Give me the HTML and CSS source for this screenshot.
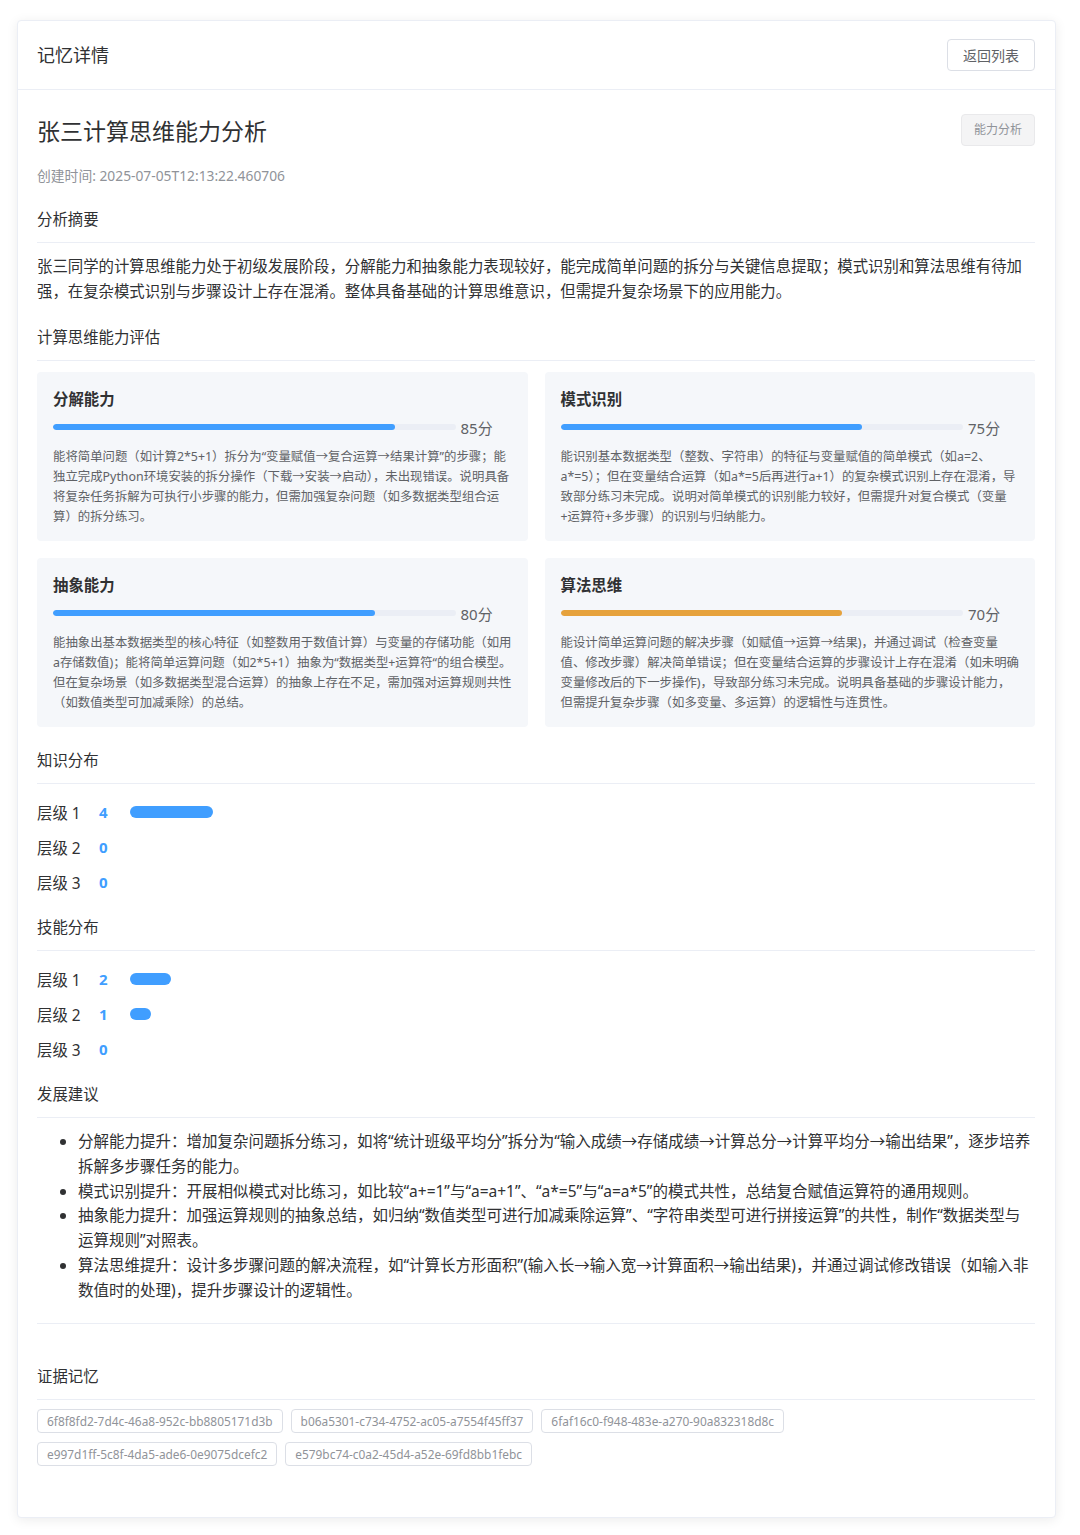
FILE: index.html
```html
<!DOCTYPE html>
<html lang="zh-CN">
<head>
<meta charset="utf-8">
<title>记忆详情</title>
<link rel="stylesheet" href="styles.css">
</head>
<body>
<div class="page">
  <div class="card">
    <div class="card-header">
      <span class="header-title">记忆详情</span>
      <button class="btn">返回列表</button>
    </div>
    <div class="card-body">
      <div class="title-row">
        <h2 class="title">张三计算思维能力分析</h2>
        <span class="type-tag">能力分析</span>
      </div>
      <div class="created">创建时间: 2025-07-05T12:13:22.460706</div>

      <div class="section">
        <div class="sec-title">分析摘要</div>
        <p class="summary">张三同学的计算思维能力处于初级发展阶段，分解能力和抽象能力表现较好，能完成简单问题的拆分与关键信息提取；模式识别和算法思维有待加强，在复杂模式识别与步骤设计上存在混淆。整体具备基础的计算思维意识，但需提升复杂场景下的应用能力。</p>
      </div>

      <div class="section">
        <div class="sec-title">计算思维能力评估</div>
        <div class="ability-grid">
          <div class="ability">
            <div class="ability-name">分解能力</div>
            <div class="bar-row">
              <div class="track"><div class="fill" style="width:85%"></div></div>
              <span class="score">85分</span>
            </div>
            <p class="desc">能将简单问题（如计算2*5+1）拆分为“变量赋值→复合运算→结果计算”的步骤；能独立完成Python环境安装的拆分操作（下载→安装→启动），未出现错误。说明具备将复杂任务拆解为可执行小步骤的能力，但需加强复杂问题（如多数据类型组合运算）的拆分练习。</p>
          </div>
          <div class="ability">
            <div class="ability-name">模式识别</div>
            <div class="bar-row">
              <div class="track"><div class="fill" style="width:75%"></div></div>
              <span class="score">75分</span>
            </div>
            <p class="desc">能识别基本数据类型（整数、字符串）的特征与变量赋值的简单模式（如a=2、a*=5）；但在变量结合运算（如a*=5后再进行a+1）的复杂模式识别上存在混淆，导致部分练习未完成。说明对简单模式的识别能力较好，但需提升对复合模式（变量+运算符+多步骤）的识别与归纳能力。</p>
          </div>
          <div class="ability">
            <div class="ability-name">抽象能力</div>
            <div class="bar-row">
              <div class="track"><div class="fill" style="width:80%"></div></div>
              <span class="score">80分</span>
            </div>
            <p class="desc">能抽象出基本数据类型的核心特征（如整数用于数值计算）与变量的存储功能（如用a存储数值)；能将简单运算问题（如2*5+1）抽象为“数据类型+运算符“的组合模型。但在复杂场景（如多数据类型混合运算）的抽象上存在不足，需加强对运算规则共性（如数值类型可加减乘除）的总结。</p>
          </div>
          <div class="ability">
            <div class="ability-name">算法思维</div>
            <div class="bar-row">
              <div class="track"><div class="fill fill-warn" style="width:70%"></div></div>
              <span class="score">70分</span>
            </div>
            <p class="desc">能设计简单运算问题的解决步骤（如赋值→运算→结果)，并通过调试（检查变量值、修改步骤）解决简单错误；但在变量结合运算的步骤设计上存在混淆（如未明确变量修改后的下一步操作)，导致部分练习未完成。说明具备基础的步骤设计能力，但需提升复杂步骤（如多变量、多运算）的逻辑性与连贯性。</p>
          </div>
        </div>
      </div>

      <div class="section">
        <div class="sec-title">知识分布</div>
        <div class="levels">
          <div class="level-row"><span class="level-label">层级 1</span><span class="level-count">4</span><span class="level-bar" style="width:83px"></span></div>
          <div class="level-row"><span class="level-label">层级 2</span><span class="level-count">0</span></div>
          <div class="level-row"><span class="level-label">层级 3</span><span class="level-count">0</span></div>
        </div>
      </div>

      <div class="section">
        <div class="sec-title">技能分布</div>
        <div class="levels">
          <div class="level-row"><span class="level-label">层级 1</span><span class="level-count">2</span><span class="level-bar" style="width:41px"></span></div>
          <div class="level-row"><span class="level-label">层级 2</span><span class="level-count">1</span><span class="level-bar" style="width:21px"></span></div>
          <div class="level-row"><span class="level-label">层级 3</span><span class="level-count">0</span></div>
        </div>
      </div>

      <div class="section">
        <div class="sec-title">发展建议</div>
        <ul class="advice">
          <li>分解能力提升：增加复杂问题拆分练习，如将“统计班级平均分”拆分为“输入成绩→存储成绩→计算总分→计算平均分→输出结果”，逐步培养拆解多步骤任务的能力。</li>
          <li>模式识别提升：开展相似模式对比练习，如比较“a+=1”与“a=a+1”、“a*=5”与“a=a*5”的模式共性，总结复合赋值运算符的通用规则。</li>
          <li>抽象能力提升：加强运算规则的抽象总结，如归纳“数值类型可进行加减乘除运算”、“字符串类型可进行拼接运算”的共性，制作“数据类型与运算规则”对照表。</li>
          <li>算法思维提升：设计多步骤问题的解决流程，如“计算长方形面积”(输入长→输入宽→计算面积→输出结果)，并通过调试修改错误（如输入非数值时的处理)，提升步骤设计的逻辑性。</li>
        </ul>
      </div>

      <div class="divider"></div>

      <div class="section evidence">
        <div class="sec-title">证据记忆</div>
        <div class="tags">
          <span class="mem-tag">6f8f8fd2-7d4c-46a8-952c-bb8805171d3b</span>
          <span class="mem-tag">b06a5301-c734-4752-ac05-a7554f45ff37</span>
          <span class="mem-tag">6faf16c0-f948-483e-a270-90a832318d8c</span>
          <span class="mem-tag">e997d1ff-5c8f-4da5-ade6-0e9075dcefc2</span>
          <span class="mem-tag">e579bc74-c0a2-45d4-a52e-69fd8bb1febc</span>
        </div>
      </div>
    </div>
  </div>
</div>
</body>
</html>
```

FILE: styles.css
```css
* { box-sizing: border-box; }
html, body { margin: 0; padding: 0; background: #ffffff; }
body {
  font-family: "Noto Sans", "Noto Sans CJK SC", sans-serif;
  color: #303133;
  font-size: 15.4px;
}
.page {
  padding: 20px 24px 18px 17px;
}
.card {
  background: #fff;
  border: 1px solid #ebeef5;
  border-radius: 4px;
  box-shadow: 0 2px 12px 0 rgba(0, 0, 0, 0.08);
}
.card-header {
  display: flex;
  justify-content: space-between;
  align-items: center;
  padding: 18px 20px 18px 19px;
  border-bottom: 1px solid #ebeef5;
}
.header-title {
  font-size: 18px;
  line-height: 32px;
  color: #303133;
}
.btn {
  font-family: inherit;
  height: 32px;
  padding: 0 15px;
  font-size: 14px;
  color: #606266;
  background: #fff;
  border: 1px solid #dcdfe6;
  border-radius: 4px;
}
.card-body {
  padding: 20px 20px 42px 19px;
}
.title-row {
  display: flex;
  justify-content: space-between;
  align-items: center;
  height: 40px;
}
.title {
  margin: 0;
  font-size: 23px;
  font-weight: 400;
  color: #303133;
}
.type-tag {
  height: 32px;
  line-height: 30px;
  padding: 0 12px;
  font-size: 12px;
  color: #909399;
  background: #f4f4f5;
  border: 1px solid #e9e9eb;
  border-radius: 4px;
}
.created {
  margin-top: 16px;
  font-size: 13.8px;
  line-height: 20px;
  color: #909399;
}
.section {
  margin-top: 22px;
}
.sec-title {
  font-size: 15.4px;
  line-height: 24px;
  color: #303133;
  padding-bottom: 10px;
  border-bottom: 1px solid #ebeef5;
  margin-bottom: 11px;
}
.summary {
  margin: 0;
  font-size: 15.4px;
  line-height: 25px;
  color: #303133;
}
.ability-grid {
  display: grid;
  grid-template-columns: 1fr 1fr;
  gap: 17px;
}
.ability {
  background: #f5f7fa;
  border-radius: 4px;
  padding: 16px 16px 14px;
}
.ability-name {
  font-size: 15.4px;
  font-weight: 700;
  line-height: 24px;
  color: #303133;
  margin-bottom: 4px;
}
.bar-row {
  display: flex;
  align-items: center;
  height: 22px;
}
.track {
  flex: 1;
  height: 6px;
  background: #ebeef5;
  border-radius: 3px;
  overflow: hidden;
}
.fill {
  height: 100%;
  background: #409eff;
  border-radius: 3px;
}
.fill-warn { background: #e6a23c; }
.score {
  width: 56px;
  padding-left: 5px;
  font-size: 15px;
  color: #606266;
}
.desc {
  margin: 9px 0 0;
  font-size: 12.4px;
  line-height: 20px;
  color: #606266;
}
.levels {
  padding-top: 5px;
}
.level-row {
  display: flex;
  align-items: center;
  height: 24px;
  margin-bottom: 11px;
}
.level-row:last-child { margin-bottom: 0; }
.level-label {
  width: 62px;
  font-size: 15.4px;
  color: #303133;
}
.level-count {
  width: 31px;
  font-size: 15px;
  font-weight: 700;
  color: #409eff;
}
.level-bar {
  height: 12px;
  border-radius: 6px;
  background: #409eff;
}
.advice {
  margin: 0;
  padding-left: 41px;
  font-size: 15.5px;
  line-height: 24.8px;
  color: #303133;
}
.divider {
  margin-top: 20px;
  border-top: 1px solid #ebeef5;
}
.evidence {
  margin-top: 41px;
}
.evidence .sec-title {
  margin-bottom: 9px;
}
.tags {
  display: flex;
  flex-wrap: wrap;
}
.mem-tag {
  height: 24px;
  line-height: 22px;
  padding: 0 9px;
  margin: 0 8px 9px 0;
  font-size: 11.9px;
  color: #909399;
  background: #fff;
  border: 1px solid #dcdfe6;
  border-radius: 4px;
}
```
